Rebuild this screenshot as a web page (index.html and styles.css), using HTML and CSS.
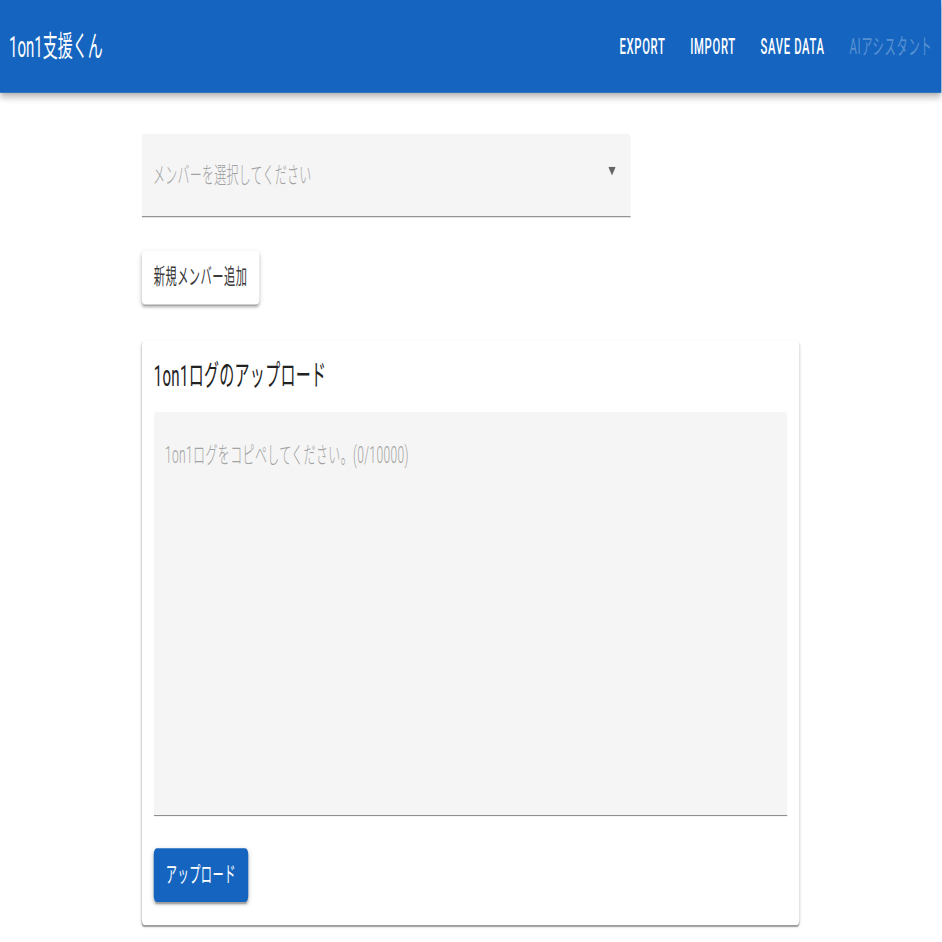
FILE: index.html
```html
<!DOCTYPE html>
<html lang="ja">
<head>
    <meta charset="UTF-8">
    <meta name="viewport" content="width=device-width, initial-scale=1.0">
    <title>1on1支援くん</title>
    <link rel="stylesheet" href="styles.css">
</head>
<body>
    <div class="frame">
        <div class="screen">
            <header class="app-bar">
                <div class="toolbar">
                    <h1 class="brand">1on1支援くん</h1>
                    <nav class="nav">
                        <button class="nav-btn">Export</button>
                        <button class="nav-btn">Import</button>
                        <button class="nav-btn">Save Data</button>
                        <button class="nav-btn" disabled>AIアシスタント</button>
                    </nav>
                </div>
            </header>

            <main class="content">
                <div class="member-select">
                    <span class="select-placeholder">メンバーを選択してください</span>
                    <svg class="select-arrow" width="10" height="6" viewBox="0 0 10 6">
                        <polygon points="0,0 10,0 5,6" fill="#666"/>
                    </svg>
                </div>

                <button class="btn btn-white">新規メンバー追加</button>

                <section class="card">
                    <h2 class="card-title">1on1ログのアップロード</h2>
                    <textarea class="log-input" placeholder="1on1ログをコピペしてください。(0/10000)"></textarea>
                    <button class="btn btn-primary">アップロード</button>
                </section>
            </main>
        </div>
    </div>
</body>
</html>
```

FILE: styles.css
```css
:root {
    --primary: #1565c0;
    --field-bg: #f5f5f5;
    --text: rgba(0, 0, 0, 0.87);
    --muted: #a2a2a2;
}

* {
    margin: 0;
    padding: 0;
    box-sizing: border-box;
}

body {
    font-family: Roboto, "Noto Sans CJK JP", sans-serif;
    color: var(--text);
    background: #fff;
}

.frame {
    width: 942px;
    height: 942px;
    overflow: hidden;
}

/* the capture is stretched: narrow horizontally, tall vertically */
.screen {
    width: 1255px;
    height: 649px;
    transform: scale(0.75, 1.45);
    transform-origin: 0 0;
}

/* App bar */
.app-bar {
    background: var(--primary);
    color: #fff;
    box-shadow: 0 2px 4px -1px rgba(0, 0, 0, 0.2),
                0 4px 5px 0 rgba(0, 0, 0, 0.14),
                0 1px 10px 0 rgba(0, 0, 0, 0.12);
    position: relative;
    z-index: 2;
}

.toolbar {
    height: 64px;
    display: flex;
    align-items: center;
    justify-content: space-between;
    padding: 0 4px 0 12px;
}

.brand {
    font-size: 20px;
    font-weight: 400;
    line-height: 1.6;
}

.nav {
    display: flex;
    gap: 17px;
}

.nav-btn {
    font-family: inherit;
    font-size: 15px;
    font-weight: 500;
    letter-spacing: 0.06em;
    text-transform: uppercase;
    line-height: 1.75;
    padding: 6px 8px;
    background: none;
    border: none;
    color: #fff;
    cursor: pointer;
}

.nav-btn:disabled {
    color: rgba(255, 255, 255, 0.3);
    font-weight: 400;
    cursor: default;
}

/* Content */
.content {
    width: 877px;
    margin: 0 auto;
    padding-top: 28px;
    display: flex;
    flex-direction: column;
    align-items: flex-start;
}

.member-select {
    width: 652px;
    height: 58px;
    background: var(--field-bg);
    border-radius: 4px 4px 0 0;
    border-bottom: 1px solid rgba(0, 0, 0, 0.42);
    display: flex;
    align-items: center;
    justify-content: space-between;
    padding: 0 20px 3px 15px;
}

.select-arrow {
    margin-top: -3px;
}

.select-placeholder {
    font-size: 16px;
    font-weight: 300;
    letter-spacing: 0.02em;
    color: var(--muted);
}

.btn {
    font-family: inherit;
    font-size: 15px;
    letter-spacing: 0.04em;
    line-height: 25px;
    padding: 6px 16px;
    border: none;
    border-radius: 4px;
    cursor: pointer;
    box-shadow: 0 3px 1px -2px rgba(0, 0, 0, 0.2),
                0 2px 2px 0 rgba(0, 0, 0, 0.14),
                0 1px 5px 0 rgba(0, 0, 0, 0.12);
}

.btn-white {
    margin-top: 23px;
    background: #fff;
    color: #3a3a3a;
}

.btn-primary {
    margin-top: 22px;
    background: var(--primary);
    color: #fff;
}

/* Upload card */
.card {
    width: 100%;
    margin-top: 25px;
    padding: 12px 16px 16px;
    background: #fff;
    border-radius: 4px;
    box-shadow: 0 2px 1px -1px rgba(0, 0, 0, 0.2),
                0 1px 1px 0 rgba(0, 0, 0, 0.14),
                0 1px 3px 0 rgba(0, 0, 0, 0.12);
    display: flex;
    flex-direction: column;
    align-items: flex-start;
}

.card-title {
    font-size: 20px;
    font-weight: 400;
    letter-spacing: 0.02em;
    line-height: 24px;
    margin-bottom: 13px;
    color: #222;
}

.log-input {
    width: 100%;
    height: 279px;
    resize: none;
    font-family: inherit;
    font-size: 16px;
    font-weight: 300;
    letter-spacing: 0.03em;
    line-height: 23px;
    padding: 18px 15px;
    background: var(--field-bg);
    border: none;
    border-bottom: 1px solid rgba(0, 0, 0, 0.42);
    border-radius: 4px 4px 0 0;
    outline: none;
    color: var(--text);
}

.log-input::placeholder {
    color: var(--muted);
    opacity: 1;
}
```
